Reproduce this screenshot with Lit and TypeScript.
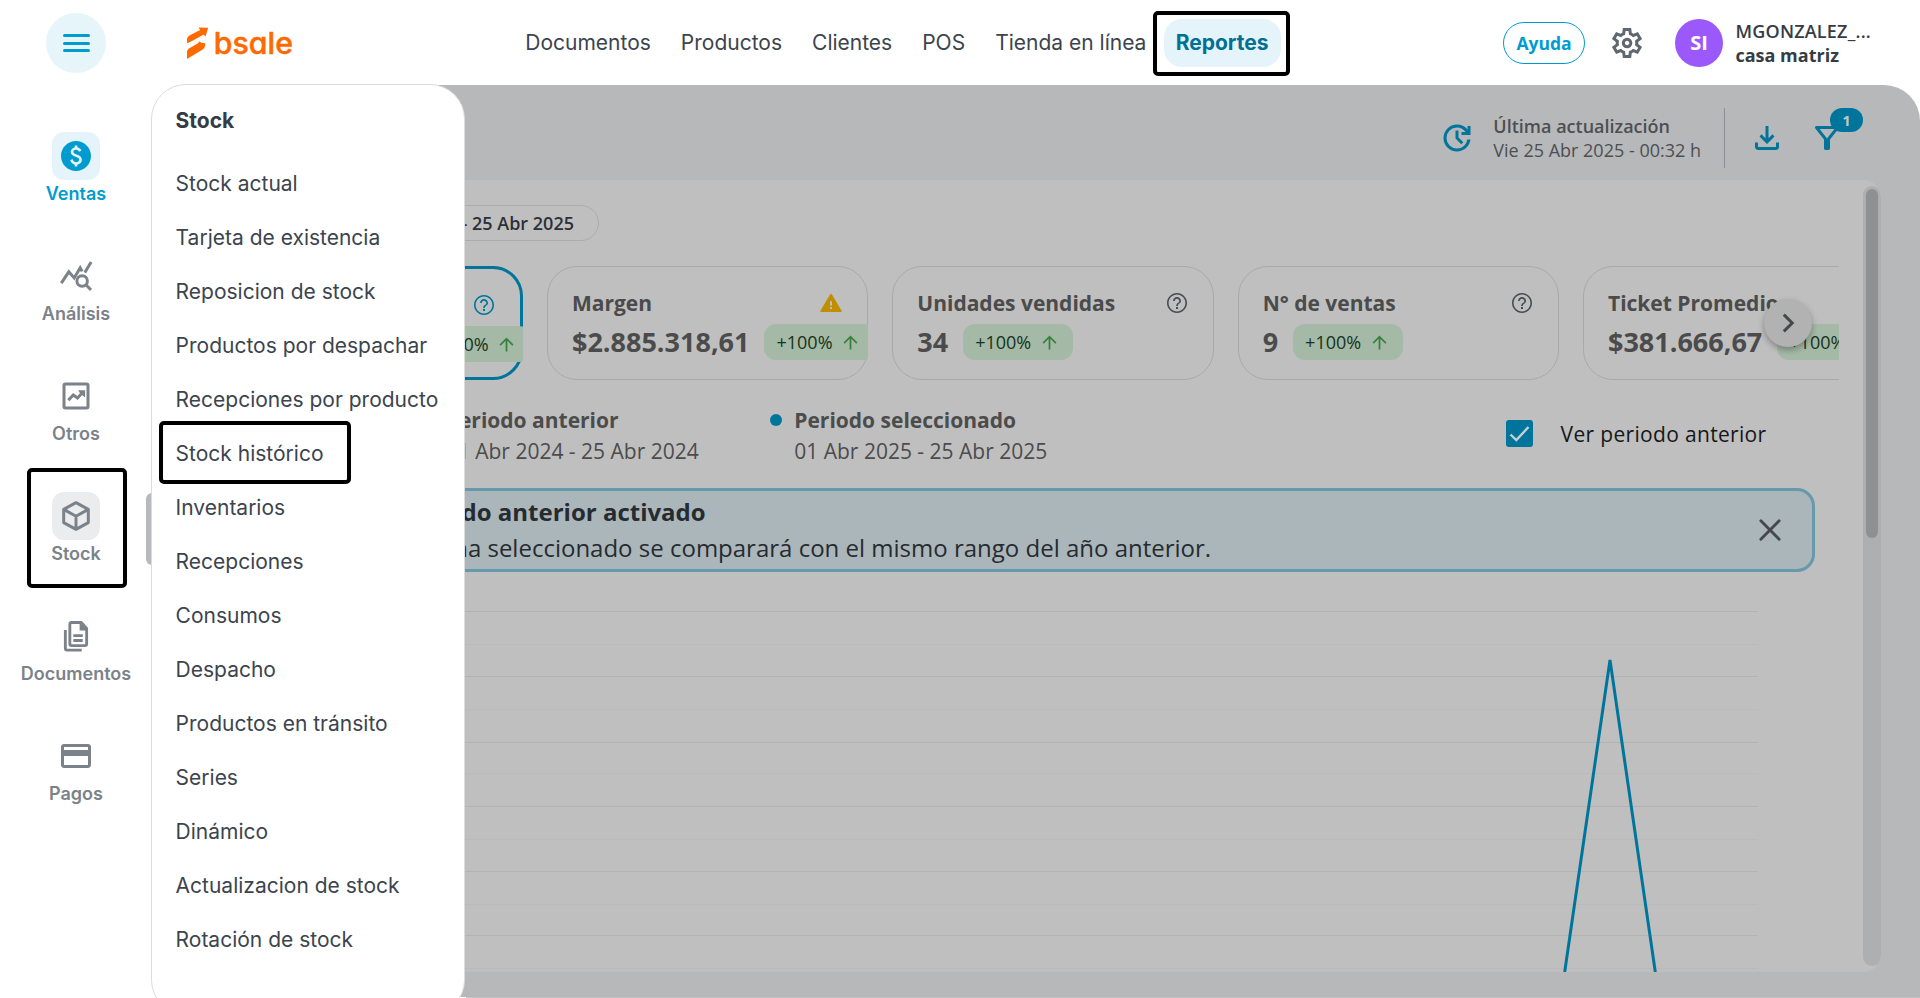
import { LitElement, html, css, svg, nothing } from "lit";
import { customElement, property } from "lit/decorators.js";
import { classMap } from "lit/directives/class-map.js";

const SYMBOLS: Record<string, string> = {
  settings:
    "m370-80-16-128q-13-5-24.5-12T307-235l-119 50L78-375l103-78q-1-7-1-13.5v-27q0-6.5 1-13.5L78-585l110-190 119 50q11-8 23-15t24-12l16-128h220l16 128q13 5 24.5 12t22.5 15l119-50 110 190-103 78q1 7 1 13.5v27q0 6.5-2 13.5l103 78-110 190-118-50q-11 8-23 15t-24 12L590-80H370Zm70-80h79l14-106q31-8 57.5-23.5T639-327l99 41 39-68-86-65q5-14 7-29.5t2-31.5q0-16-2-31.5t-7-29.5l86-65-39-68-99 42q-22-23-48.5-38.5T533-694l-13-106h-79l-14 106q-31 8-57.5 23.5T321-633l-99-41-39 68 86 64q-5 15-7 30t-2 32q0 16 2 31t7 30l-86 65 39 68 99-42q22 23 48.5 38.5T427-266l13 106Zm42-180q58 0 99-41t41-99q0-58-41-99t-99-41q-59 0-99.5 41T342-480q0 58 40.5 99t99.5 41Zm0-80q-25 0-42.5-17.5T422-480q0-25 17.5-42.5T482-540q25 0 42.5 17.5T542-480q0 25-17.5 42.5T482-420Z",
  update:
    "M480-120q-75 0-140.5-28.5t-114-77q-48.5-48.5-77-114T120-480q0-75 28.5-140.5t77-114q48.5-48.5 114-77T480-840q82 0 155.5 35T760-706v-94h80v240H600v-80h110q-41-56-101-88t-129-32q-117 0-198.5 81.5T200-480q0 117 81.5 198.5T480-200q105 0 183.5-68T756-440h82q-15 137-117.5 228.5T480-120Zm112-192L440-464v-216h80v184l128 128-56 56Z",
  download:
    "M480-320 280-520l56-58 104 104v-326h80v326l104-104 56 58-200 200ZM240-160q-33 0-56.5-23.5T160-240v-120h80v120h480v-120h80v120q0 33-23.5 56.5T720-160H240Z",
  filter:
    "M440-160q-17 0-28.5-11.5T400-200v-240L168-736q-15-20-4.5-42t36.5-22h560q26 0 36.5 22t-4.5 42L560-440v240q0 17-11.5 28.5T520-160h-80Zm40-308 198-252H282l198 252Z",
  up: "M440-160v-487L216-423l-56-57 320-320 320 320-56 57-224-224v487h-80Z",
};

const GLYPHS: Record<string, unknown> = {
  help: svg`<path d="M11 18h2v-2h-2v2zm1-16C6.48 2 2 6.48 2 12s4.480 10 10 10 10-4.480 10-10S17.520 2 12 2zm0 18.400c-4.640 0-8.400-3.760-8.400-8.400S7.360 3.600 12 3.600s8.400 3.760 8.400 8.400-3.760 8.400-8.400 8.400zM12 6c-2.210 0-4 1.790-4 4h1.700c0-1.200 1-2.300 2.300-2.300s2.300 1 2.300 2.300c0 2-3.150 1.850-3.150 5h1.700c0-2.250 3.150-2.500 3.150-5 0-2.210-1.790-4-4-4z"/>`,
  warning: svg`<path d="M2.200 21h19.600a.9.9 0 0 0 .8-1.300L12.800 3.300a.9.9 0 0 0-1.600 0L1.400 19.700a.9.9 0 0 0 .8 1.300zM13 18h-2v-2h2zm0-3.500h-2V10.300h2z"/>`,
  chevron: svg`<path d="M9.200 6.400 14.800 12l-5.600 5.600" fill="none" stroke="currentColor" stroke-width="2"/>`,
  close: svg`<path d="M5.900 5.900 18.100 18.100M18.100 5.900 5.900 18.100" fill="none" stroke="currentColor" stroke-width="1.900" stroke-linecap="round"/>`,
  ventas: svg`<path d="M12 2C6.480 2 2 6.480 2 12s4.480 10 10 10 10-4.480 10-10S17.520 2 12 2zm.88 15.760V19h-1.750v-1.290c-.74-.18-2.390-.77-3.020-2.960l1.650-.67c.06.22.58 2.090 2.400 2.090.93 0 1.980-.48 1.980-1.610 0-.96-.7-1.460-2.280-2.030-1.100-.39-3.350-1.030-3.350-3.310 0-.1.010-2.400 2.620-2.960V5h1.750v1.240c1.840.32 2.510 1.790 2.660 2.230l-1.580.67c-.11-.35-.59-1.340-1.900-1.340-.7 0-1.810.37-1.810 1.390 0 .95.860 1.310 2.640 1.900 2.400.83 3.010 2.050 3.010 3.450 0 2.630-2.500 3.130-3.020 3.220z"/>`,
  analisis: svg`<g fill="none" stroke="currentColor" stroke-width="2" stroke-linecap="butt" stroke-linejoin="miter"><circle cx="16.100" cy="15.300" r="3.500"/><path d="m18.600 17.800 3.400 3.500M2.200 16.700l5-7.500 3.600 4.100 4-6.800 1.300 2.400M17.900 9.700l4.200-7"/></g>`,
  otros: svg`<g fill="none" stroke="currentColor" stroke-width="2"><rect x="4" y="4" width="16" height="16" rx="1"/><path d="m6.900 14.900 3.300-3.600 2.800 2 3.700-4"/></g><path d="M13.400 8.200h4.700V13l-1.700-1.300-1.900-1.900z"/>`,
  stock: svg`<g fill="none" stroke="currentColor" stroke-width="2" stroke-linejoin="round"><path d="M12 3.100 20.200 7.600v8.800L12 20.900l-8.200-4.500V7.600zM3.800 7.600 12 12.200l8.200-4.600M12 12.200v8.700"/></g>`,
  documentos: svg`<g fill="none" stroke="currentColor" stroke-width="1.900" stroke-linejoin="round"><path d="M9.100 3h6.400l3.600 4v10.200a1.200 1.200 0 0 1-1.200 1.200H9.100a1.200 1.200 0 0 1-1.200-1.200V4.200A1.200 1.200 0 0 1 9.100 3zM4.900 8v12.200a1.200 1.200 0 0 0 1.200 1.200h9.700M10.200 11.700h6.300M10.200 15h6.300"/></g><path d="M14.400 3v5.400h5.300z"/>`,
  pagos: svg`<path d="M20 4H4c-1.110 0-1.990.89-1.990 2L2 18c0 1.110.89 2 2 2h16c1.110 0 2-.89 2-2V6c0-1.110-.89-2-2-2zm0 14H4v-6h16v6zm0-10H4V6h16v2z"/>`,
};

const icon = (name: string, size = 36) =>
  name in SYMBOLS
    ? html`<svg class="ico" width=${size} height=${size} viewBox="0 -960 960 960"><path d=${SYMBOLS[name]}></path></svg>`
    : html`<svg class="ico" width=${size} height=${size} viewBox="0 0 24 24">${GLYPHS[name]}</svg>`;

const iconStyles = css`
  .ico {
    display: block;
    flex: none;
    fill: currentColor;
  }
`;

@customElement("kpi-card")
class KpiCard extends LitElement {
  @property() label = "";
  @property() value = "";
  @property() hint = "help";
  @property({ type: Boolean }) selected = false;

  static styles = [
    iconStyles,
    css`
      :host {
        display: block;
        flex: none;
        width: 321.330px;
      }
      .card {
        box-sizing: border-box;
        height: 114px;
        border: 1px solid #a9a9a9;
        border-radius: 30px;
        padding: 20px 0 0 24px;
        color: #4b4b4b;
        white-space: nowrap;
      }
      .card.selected {
        border: 3px solid #00759b;
      }
      .top {
        display: flex;
        align-items: center;
        justify-content: space-between;
        height: 31px;
        padding-right: 24px;
        font: 700 21px/31px "Open Sans", sans-serif;
      }
      .label {
        padding-top: 1px;
      }
      .hint {
        color: #474b52;
      }
      .selected .hint {
        color: #00759b;
      }
      .hint.warning {
        color: #bf8f00;
      }
      .bottom {
        display: flex;
        align-items: center;
        gap: 15px;
        margin-top: 6px;
        height: 36px;
        overflow: hidden;
        margin-right: -1px;
        font: 700 27px/34px "Open Sans", sans-serif;
      }
      .value {
        flex: none;
      }
      .selected .bottom {
        margin-right: -3px;
      }
      .selected .value {
        width: 177px;
      }
      .delta {
        box-sizing: border-box;
        flex: none;
        display: flex;
        align-items: center;
        gap: 6px;
        height: 36px;
        padding: 0 12px;
        border-radius: 12px;
        background: #a4b9a6;
        color: #16331a;
        font: 500 18px/27px "Open Sans", sans-serif;
      }
      .arrow {
        width: 24px;
        display: flex;
        justify-content: center;
        color: #38803c;
      }
    `,
  ];

  render() {
    return html`<div class=${classMap({ card: true, selected: this.selected })}>
      <div class="top">
        <span class="label">${this.label}</span>
        ${this.hint ? html`<span class=${classMap({ hint: true, warning: this.hint === "warning" })}>${icon(this.hint, 24)}</span>` : nothing}
      </div>
      <div class="bottom">
        <span class="value">${this.value}</span>
        <span class="delta">+100%<span class="arrow">${icon("up", 21)}</span></span>
      </div>
    </div>`;
  }
}

const NAV = ["Documentos", "Productos", "Clientes", "POS", "Tienda en línea"];
const SIDE: [string, string][] = [
  ["ventas", "Ventas"],
  ["analisis", "Análisis"],
  ["otros", "Otros"],
  ["stock", "Stock"],
  ["documentos", "Documentos"],
  ["pagos", "Pagos"],
];
const MENU = [
  "Stock actual",
  "Tarjeta de existencia",
  "Reposicion de stock",
  "Productos por despachar",
  "Recepciones por producto",
  "Stock histórico",
  "Inventarios",
  "Recepciones",
  "Consumos",
  "Despacho",
  "Productos en tránsito",
  "Series",
  "Dinámico",
  "Actualizacion de stock",
  "Rotación de stock",
];
const GRID = [611, 644, 676, 709, 742, 773, 806, 839, 871, 904, 935, 968];

@customElement("app-root")
class AppRoot extends LitElement {
  static styles = [
    iconStyles,
    css`
      :host {
        position: relative;
        display: grid;
        grid-template-columns: minmax(0, 1fr);
        grid-template-rows: 85px 912px;
        width: 1920px;
        height: 998px;
        overflow: hidden;
        background: #fff;
        color: #3c444e;
        font-family: "Inter", sans-serif;
      }
      header {
        display: flex;
        align-items: center;
        height: 86px;
      }
      header > * {
        flex: none;
      }
      .burger {
        width: 60px;
        height: 60px;
        margin-left: 46px;
        border-radius: 50%;
        background: #e5f5fa;
        display: flex;
        flex-direction: column;
        align-items: center;
        justify-content: center;
        gap: 4.500px;
      }
      .burger i {
        width: 27px;
        height: 3px;
        border-radius: 1.500px;
        background: #009ccf;
      }
      .logo {
        margin-left: 80px;
        width: 110px;
        height: 40px;
        display: block;
      }
      .logo text {
        font: 500 30px "Inter", sans-serif;
        font-feature-settings: "cv11" 1;
        fill: #ff6a00;
        stroke: #ff6a00;
        stroke-width: 0.500px;
        stroke-linejoin: round;
      }
      nav {
        display: flex;
        align-items: center;
        width: 772px;
        margin-left: 214.300px;
        font-size: 21px;
        line-height: 48px;
        white-space: nowrap;
      }
      nav a {
        padding: 0 15px;
      }
      nav .active {
        position: relative;
        margin-left: 2.300px;
        padding: 0 12px;
        height: 48px;
        border-radius: 18px;
        background: #e5f4fa;
        color: #007094;
        font-weight: 700;
      }
      .mark {
        position: absolute;
        box-sizing: border-box;
        border: 4px solid #000;
        border-radius: 5px;
      }
      .mark.nav-mark {
        left: -11px;
        top: -8px;
        width: 137px;
        height: 65px;
      }
      .help {
        box-sizing: border-box;
        margin-left: 220.700px;
        width: 82px;
        height: 42px;
        border: 1px solid #009ccf;
        border-radius: 21px;
        color: #009ccf;
        font: 700 17.500px/40px "Open Sans", sans-serif;
        text-align: center;
      }
      .gear {
        margin-left: 24px;
        color: #5f6771;
      }
      .avatar {
        margin-left: 30px;
        width: 48px;
        height: 48px;
        border-radius: 50%;
        background: #9b59fb;
        color: #fff;
        font: 700 20px/48px "Open Sans", sans-serif;
        text-align: center;
      }
      .user {
        margin-left: 12.500px;
        font: 700 18px/24px "Open Sans", sans-serif;
        color: #343c46;
        white-space: nowrap;
      }
      .user .name {
        font-weight: 600;
        letter-spacing: 0.200px;
      }
      .body {
        display: flex;
      }
      aside {
        flex: none;
        width: 152px;
        padding-top: 47px;
      }
      .side {
        position: relative;
        height: 120px;
        display: flex;
        flex-direction: column;
        align-items: center;
        color: #7b828a;
        font-weight: 600;
        font-size: 18px;
        line-height: 27px;
      }
      .tile {
        width: 48px;
        height: 48px;
        border-radius: 12px;
        display: flex;
        align-items: center;
        justify-content: center;
      }
      .side.ventas {
        color: #009ccf;
      }
      .ventas .tile {
        background: #e5f4fa;
      }
      .side.stock .tile {
        background: #ebecee;
      }
      .mark.side-mark {
        left: 27px;
        top: -24px;
        width: 100px;
        height: 120px;
      }
      .grip {
        position: absolute;
        left: 146px;
        top: 1px;
        width: 6px;
        height: 72px;
        border-radius: 6px 0 0 6px;
        background: #b8b8bf;
      }
      .panel {
        position: absolute;
        box-sizing: border-box;
        left: 151px;
        top: 84px;
        width: 314px;
        height: 931px;
        border: 1px solid #dcdcdd;
        border-radius: 35px;
        background: #fff;
        padding: 9px 0 0 23.600px;
        font-size: 21px;
        line-height: 54px;
        white-space: nowrap;
      }
      .panel h2 {
        margin: 0 0 9px;
        font-size: 21px;
        font-weight: 700;
        color: #343b45;
      }
      .panel .item {
        position: relative;
        height: 54px;
      }
      .mark.menu-mark {
        left: -16.600px;
        top: -6px;
        width: 192px;
        height: 63px;
      }
      main {
        flex: 1;
        min-width: 0;
        margin-left: 23px;
        padding: 0 39px 25px 3px;
        display: flex;
        flex-direction: column;
        background: #b7b8ba;
        border-radius: 36px 36px 0 0;
        font-family: "Open Sans", sans-serif;
      }
      .foot {
        position: absolute;
        left: 466px;
        right: 0;
        bottom: 0;
        height: 1px;
        background: #c3c3c4;
      }
      .tools {
        height: 95px;
        display: flex;
        align-items: center;
        justify-content: flex-end;
        padding: 11px 36px 0 0;
        box-sizing: border-box;
        color: #00759b;
      }
      .updated {
        margin: 0 23px 0 18.500px;
        color: #4d4f52;
        font-size: 18px;
        line-height: 24px;
        white-space: nowrap;
      }
      .updated b {
        display: block;
        font-weight: 600;
      }
      .rule {
        width: 1px;
        height: 60px;
        background: #8e8f92;
        margin-right: 24px;
      }
      .filter {
        position: relative;
        margin-left: 24px;
      }
      .badge {
        position: absolute;
        left: 21px;
        top: -12px;
        width: 33px;
        height: 24px;
        border-radius: 12px;
        background: #00759b;
        color: #bfc6c9;
        font: 700 15px/24px "Open Sans", sans-serif;
        text-align: center;
      }
      .sheet {
        height: 792px;
        display: flex;
        background: #bfbfbf;
        border-radius: 18px;
        overflow: hidden;
      }
      .content {
        flex: 1;
        min-width: 0;
        padding: 25px 24px 0 23.670px;
        display: flex;
        flex-direction: column;
      }
      .track {
        flex: none;
        box-sizing: border-box;
        width: 18px;
        height: 780px;
        margin-top: 6px;
        padding: 3px;
        border-radius: 9px;
        background: #aeafb1;
      }
      .thumb {
        height: 349px;
        border-radius: 6px;
        background: #8f9092;
      }
      .date {
        box-sizing: border-box;
        flex: none;
        width: 397.330px;
        height: 36px;
        border: 1px solid #acacac;
        border-radius: 18px;
        padding-right: 24px;
        text-align: right;
        font-weight: 600;
        font-size: 18px;
        line-height: 34px;
        color: #2c3037;
      }
      .kpi-wrap {
        position: relative;
        flex: none;
        margin-top: 25px;
        height: 114px;
      }
      .kpis {
        display: flex;
        gap: 24px;
        overflow: hidden;
      }
      .next {
        position: absolute;
        right: 27px;
        top: 33px;
        width: 48px;
        height: 48px;
        border-radius: 50%;
        background: #b2b2b2;
        box-shadow: 0 3px 6px rgba(0, 0, 0, 0.3);
        color: #44494f;
        display: flex;
        align-items: center;
        justify-content: center;
      }
      .legend {
        flex: none;
        margin-top: 24px;
        height: 60px;
        display: flex;
        align-items: flex-start;
        font-size: 21px;
        line-height: 31.500px;
        color: #4c4c4c;
        white-space: nowrap;
      }
      .period {
        display: flex;
      }
      .period.prev {
        margin-left: 219.500px;
        width: 348.500px;
      }
      .period i {
        width: 12px;
        height: 12px;
        margin: 10px 12.600px 0 0;
        border-radius: 50%;
        background: #00759b;
      }
      .prev i {
        background: #8e8e8e;
      }
      .period b {
        display: block;
        padding-top: 1px;
        line-height: 30.500px;
      }
      .check {
        margin: 16px 72.500px 0 auto;
        display: flex;
        align-items: center;
        gap: 28px;
        height: 27px;
        color: #15171a;
        letter-spacing: 0.330px;
      }
      .check span:last-child {
        padding-top: 2px;
      }
      .box {
        width: 27px;
        height: 27px;
        border-radius: 3px;
        background: #00759b;
      }
      .box svg {
        display: block;
      }
      .alert {
        flex: none;
        box-sizing: border-box;
        margin: 24px 24px 0 0;
        height: 84px;
        border: 3px solid #6699ac;
        border-radius: 18px;
        background: #abb6bb;
        display: flex;
        align-items: center;
        padding-right: 24px;
        color: #262b30;
        font-size: 24px;
        line-height: 36px;
        white-space: nowrap;
      }
      .alert .copy {
        width: 1006.500px;
        text-align: right;
      }
      .alert b {
        display: block;
        margin-right: 505.500px;
      }
      .alert .x {
        margin-left: auto;
        color: #45494d;
      }
      .chart {
        flex: none;
        display: block;
        width: 1637px;
        height: 400px;
      }
    `,
  ];

  render() {
    return html`
      <header>
        <div class="burger"><i></i><i></i><i></i></div>
        <svg class="logo" viewBox="186 23 110 40">
          <g fill="#ff6a00">
            <path d="M187 43.200V39q.3-2.200 2.400-3.400l10.800-5.500-1.800-2.700 9.700.3-2.600 9.100-1.800-2.300-11.200 6.300q-3.500 1.800-5.500 2.400z"></path>
            <path d="M187 59v-7.800q.3-1.700 1.900-2.700l8.700-5.100 2.100-2.100q1 1.700 3 1.600l2.500.3-.2 2.700q-.4 2.300-2.300 3.500z"></path>
          </g>
          <text x="213.800" y="54.300" textLength="79.200" lengthAdjust="spacingAndGlyphs">bsale</text>
        </svg>
        <nav>
          ${NAV.map((n) => html`<a>${n}</a>`)}
          <a class="active">Reportes<span class="mark nav-mark"></span></a>
        </nav>
        <div class="help">Ayuda</div>
        <div class="gear">${icon("settings")}</div>
        <div class="avatar">SI</div>
        <div class="user"><div class="name">MGONZALEZ_...</div><div>casa matriz</div></div>
      </header>
      <div class="body">
        <aside>
          ${SIDE.map(
            ([id, label]) => html`<div class="side ${id}">
              <div class="tile">${icon(id)}</div>
              ${label}
              ${id === "stock" ? html`<span class="mark side-mark"></span><span class="grip"></span>` : nothing}
            </div>`
          )}
        </aside>
        <main>
          <div class="tools">
            ${icon("update")}
            <div class="updated"><b>Última actualización</b>Vie 25 Abr 2025 - 00:32 h</div>
            <div class="rule"></div>
            ${icon("download")}
            <div class="filter">${icon("filter")}<span class="badge">1</span></div>
          </div>
          <div class="sheet">
            <div class="content">
              <div class="date">- 25 Abr 2025</div>
              <div class="kpi-wrap">
                <div class="kpis">
                  <kpi-card selected></kpi-card>
                  <kpi-card label="Margen" value="$2.885.318,61" hint="warning"></kpi-card>
                  <kpi-card label="Unidades vendidas" value="34"></kpi-card>
                  <kpi-card label="N° de ventas" value="9"></kpi-card>
                  <kpi-card label="Ticket Promedio" value="$381.666,67" hint=""></kpi-card>
                </div>
                <div class="next">${icon("chevron")}</div>
              </div>
              <div class="legend">
                <div class="period prev"><i></i><div><b>Periodo anterior</b>01 Abr 2024 - 25 Abr 2024</div></div>
                <div class="period"><i></i><div><b>Periodo seleccionado</b>01 Abr 2025 - 25 Abr 2025</div></div>
                <div class="check">
                  <span class="box"><svg width="27" height="27" viewBox="0 0 27 27"><path d="M4.500 14.500 10.300 20 22.500 7" fill="none" stroke="#c8cfd2" stroke-width="2.400"></path></svg></span>
                  <span>Ver periodo anterior</span>
                </div>
              </div>
              <div class="alert">
                <div class="copy">
                  <b>Periodo anterior activado</b>
                  fecha seleccionado se comparará con el mismo rango del año anterior.
                </div>
                <div class="x">${icon("close")}</div>
              </div>
              <svg class="chart" viewBox="202 572 1637 400">
                ${GRID.map((y, i) => svg`<rect x="202" y=${y} width="1556" height="1" fill=${i % 2 ? "#bababa" : "#b3b3b3"}></rect>`)}
                <polyline points="1564.700,972 1610,660 1655.300,972" fill="none" stroke="#00759b" stroke-width="3" stroke-linejoin="bevel"></polyline>
              </svg>
            </div>
            <div class="track"><div class="thumb"></div></div>
          </div>
        </main>
      </div>
      <div class="panel">
        <h2>Stock</h2>
        ${MENU.map((m) => html`<div class="item">${m}${m === "Stock histórico" ? html`<span class="mark menu-mark"></span>` : nothing}</div>`)}
      </div>
      <div class="foot"></div>
    `;
  }
}
